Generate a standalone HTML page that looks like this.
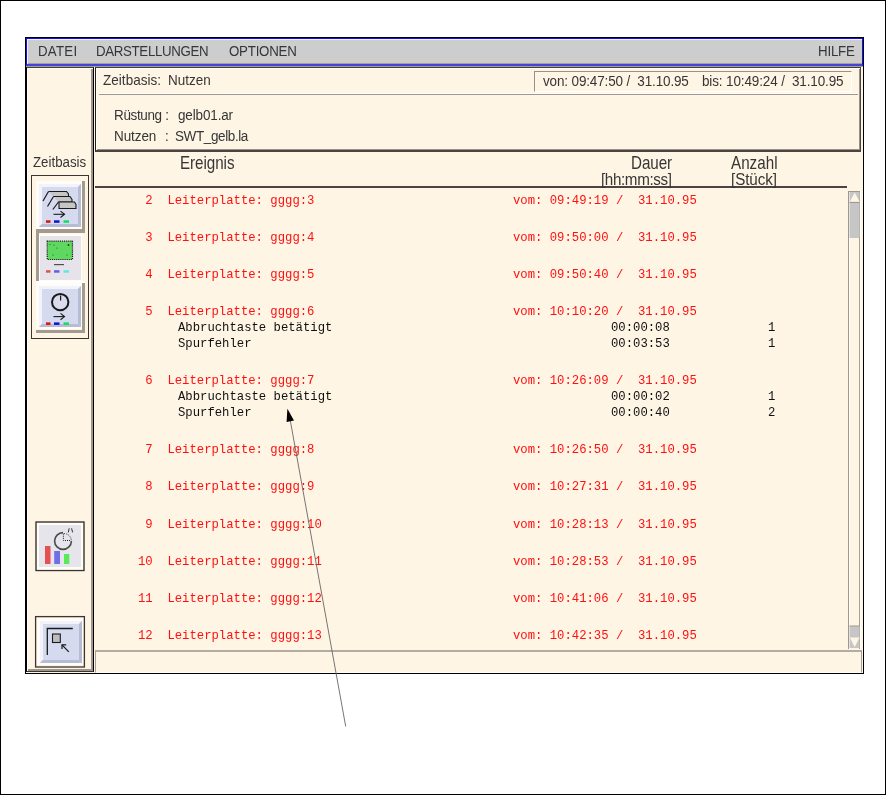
<!DOCTYPE html>
<html><head><meta charset="utf-8">
<style>
*{box-sizing:border-box;margin:0;padding:0}
html,body{width:886px;height:795px;overflow:hidden;background:#fff}
body{position:relative;font-family:"Liberation Sans",sans-serif;color:#363636}
.a{position:absolute;will-change:transform}
.s{font-family:"Liberation Sans",sans-serif;white-space:pre;line-height:1}
.m{font-family:"Liberation Mono",monospace;white-space:pre;line-height:1}
.r{color:#ff1010}
.k{color:#101010}
</style></head><body>
<div class="a" style="left:0;top:0;width:886px;height:795px;border:1px solid #000"></div>
<div class="a" style="left:25px;top:37px;width:839px;height:637px;border:1px solid #000;background:#fff5e5"></div>
<div class="a" style="left:26px;top:38px;width:837px;height:28px;border:1px solid #1010f0;border-bottom:2px solid #4444d8;background:#cdcdcd;box-shadow:inset 1px 1px 0 #f4f4f4, inset 0 -1px 0 #a8a098"></div>
<div class="a" style="left:26px;top:66px;width:837px;height:1px;background:#a8a090"></div>
<div class="a" style="left:26px;top:67px;width:68px;height:605px;border-top:1px solid #404040;border-left:1px solid #000;border-right:1px solid #000;border-bottom:1px solid #3a3632;box-shadow:inset 1px 1px 0 #fff, inset -2px -2px 0 #a0968c"></div>
<div class="a" style="left:95px;top:67px;width:766px;height:85px;border-top:1px solid #404040;border-left:1px solid #202020;border-right:1px solid #4a4540;border-bottom:2px solid #4a4540;box-shadow:inset 1px 1px 0 #fff, inset -1px -1px 0 #9a9088"></div>
<div class="a" style="left:99px;top:93px;width:759px;height:1px;background:#fff"></div>
<div class="a" style="left:99px;top:94px;width:759px;height:1px;background:#a09890"></div>
<div class="a" style="left:534px;top:71px;width:318px;height:21px;border-top:1px solid #9a9088;border-left:1px solid #9a9088;border-bottom:1px solid #fff;border-right:1px solid #fff"></div>
<div class="a" style="left:95px;top:186px;width:752px;height:2px;background:#4a4540"></div>
<div class="a" style="left:848px;top:191px;width:12px;height:458px;background:#fff5e5;border-left:1px solid #a09890;border-top:1px solid #a09890;border-right:1px solid #a89e94;box-shadow:inset 1px 0 0 #fffdf8"></div>
<div class="a" style="left:860px;top:191px;width:1px;height:458px;background:#fffdf8"></div>
<div class="a" style="left:95px;top:650px;width:767px;height:23px;border-top:2px solid #b4aca2;border-left:1px solid #a8a098;border-right:1px solid #a8a098;border-bottom:1px solid #fff"></div>
<div id="t_datei" class="a s" style="left:38.00px;top:45.14px;font-size:13.300px;letter-spacing:0.250px;transform:scaleY(1.1);transform-origin:0 10.86px;">DATEI</div>
<div id="t_dars" class="a s" style="left:96.05px;top:45.14px;font-size:13.300px;letter-spacing:-0.342px;transform:scaleY(1.1);transform-origin:0 10.86px;">DARSTELLUNGEN</div>
<div id="t_opt" class="a s" style="left:228.82px;top:45.14px;font-size:13.300px;letter-spacing:-0.229px;transform:scaleY(1.1);transform-origin:0 10.86px;">OPTIONEN</div>
<div id="t_hilfe" class="a s" style="left:817.50px;top:45.14px;font-size:13.300px;letter-spacing:-0.200px;transform:scaleY(1.1);transform-origin:0 10.86px;">HILFE</div>
<div id="t_zb" class="a s" style="left:33.24px;top:155.84px;font-size:13.300px;letter-spacing:0.000px;transform:scaleY(1.1);transform-origin:0 10.86px;">Zeitbasis</div>
<div id="t_zb2" class="a s" style="left:102.86px;top:74.47px;font-size:13.500px;letter-spacing:0.033px;transform:scaleY(1.06);transform-origin:0 11.03px;">Zeitbasis:</div>
<div id="t_nutzen0" class="a s" style="left:167.66px;top:74.47px;font-size:13.500px;letter-spacing:0.020px;transform:scaleY(1.06);transform-origin:0 11.03px;">Nutzen</div>
<div id="t_von" class="a s" style="left:542.55px;top:74.57px;font-size:13.500px;letter-spacing:-0.146px;transform:scaleY(1.06);transform-origin:0 11.03px;">von: 09:47:50 /  31.10.95</div>
<div id="t_bis" class="a s" style="left:701.50px;top:74.57px;font-size:13.500px;letter-spacing:-0.138px;transform:scaleY(1.06);transform-origin:0 11.03px;">bis: 10:49:24 /  31.10.95</div>
<div id="t_ruest" class="a s" style="left:114.24px;top:109.17px;font-size:13.500px;letter-spacing:-0.363px;transform:scaleY(1.07);transform-origin:0 11.03px;">Rüstung :</div>
<div id="t_gelb" class="a s" style="left:177.82px;top:109.17px;font-size:13.500px;letter-spacing:-0.150px;transform:scaleY(1.07);transform-origin:0 11.03px;">gelb01.ar</div>
<div id="t_nutz" class="a s" style="left:114.24px;top:130.47px;font-size:13.500px;letter-spacing:-0.080px;transform:scaleY(1.07);transform-origin:0 11.03px;">Nutzen</div>
<div id="t_colon2" class="a s" style="left:164.50px;top:130.47px;font-size:13.500px;letter-spacing:0.000px;transform:scaleY(1.07);transform-origin:0 11.03px;">:</div>
<div id="t_swt" class="a s" style="left:175.07px;top:130.47px;font-size:13.500px;letter-spacing:-0.390px;transform:scaleY(1.07);transform-origin:0 11.03px;">SWT_gelb.la</div>
<div id="t_ereig" class="a s" style="left:179.82px;top:156.03px;font-size:15.200px;letter-spacing:-0.057px;transform:scaleY(1.18);transform-origin:0 12.47px;">Ereignis</div>
<div id="t_dauer" class="a s" style="left:630.66px;top:156.33px;font-size:15.200px;letter-spacing:-0.050px;transform:scaleY(1.18);transform-origin:0 12.47px;">Dauer</div>
<div id="t_hh" class="a s" style="left:600.66px;top:172.03px;font-size:15.200px;letter-spacing:-0.367px;transform:scaleY(1.12);transform-origin:0 12.47px;">[hh:mm:ss]</div>
<div id="t_anz" class="a s" style="left:731.24px;top:156.33px;font-size:15.200px;letter-spacing:0.020px;transform:scaleY(1.18);transform-origin:0 12.47px;">Anzahl</div>
<div id="t_stk" class="a s" style="left:730.55px;top:172.03px;font-size:15.200px;letter-spacing:-0.067px;transform:scaleY(1.12);transform-origin:0 12.47px;">[Stück]</div>
<div class="a m r" style="left:138.00px;top:194.82px;font-size:12.25px;letter-spacing:0.0px;"> 2  Leiterplatte: gggg:3</div>
<div class="a m r" style="left:512.50px;top:194.82px;font-size:12.25px;letter-spacing:0.0px;">vom: 09:49:19 /  31.10.95</div>
<div class="a m r" style="left:138.00px;top:231.92px;font-size:12.25px;letter-spacing:0.0px;"> 3  Leiterplatte: gggg:4</div>
<div class="a m r" style="left:512.50px;top:231.92px;font-size:12.25px;letter-spacing:0.0px;">vom: 09:50:00 /  31.10.95</div>
<div class="a m r" style="left:138.00px;top:269.02px;font-size:12.25px;letter-spacing:0.0px;"> 4  Leiterplatte: gggg:5</div>
<div class="a m r" style="left:512.50px;top:269.02px;font-size:12.25px;letter-spacing:0.0px;">vom: 09:50:40 /  31.10.95</div>
<div class="a m r" style="left:138.00px;top:306.02px;font-size:12.25px;letter-spacing:0.0px;"> 5  Leiterplatte: gggg:6</div>
<div class="a m r" style="left:512.50px;top:306.02px;font-size:12.25px;letter-spacing:0.0px;">vom: 10:10:20 /  31.10.95</div>
<div class="a m k" style="left:178.00px;top:322.22px;font-size:12.25px;letter-spacing:0.0px;">Abbruchtaste betätigt</div>
<div class="a m k" style="left:611.00px;top:322.22px;font-size:12.25px;letter-spacing:0.0px;">00:00:08</div>
<div class="a m k" style="left:767.50px;top:322.22px;font-size:12.25px;letter-spacing:0.0px;">1</div>
<div class="a m k" style="left:178.00px;top:338.02px;font-size:12.25px;letter-spacing:0.0px;">Spurfehler</div>
<div class="a m k" style="left:611.00px;top:338.02px;font-size:12.25px;letter-spacing:0.0px;">00:03:53</div>
<div class="a m k" style="left:767.50px;top:338.02px;font-size:12.25px;letter-spacing:0.0px;">1</div>
<div class="a m r" style="left:138.00px;top:374.82px;font-size:12.25px;letter-spacing:0.0px;"> 6  Leiterplatte: gggg:7</div>
<div class="a m r" style="left:512.50px;top:374.82px;font-size:12.25px;letter-spacing:0.0px;">vom: 10:26:09 /  31.10.95</div>
<div class="a m k" style="left:178.00px;top:391.12px;font-size:12.25px;letter-spacing:0.0px;">Abbruchtaste betätigt</div>
<div class="a m k" style="left:611.00px;top:391.12px;font-size:12.25px;letter-spacing:0.0px;">00:00:02</div>
<div class="a m k" style="left:767.50px;top:391.12px;font-size:12.25px;letter-spacing:0.0px;">1</div>
<div class="a m k" style="left:178.00px;top:406.62px;font-size:12.25px;letter-spacing:0.0px;">Spurfehler</div>
<div class="a m k" style="left:611.00px;top:406.62px;font-size:12.25px;letter-spacing:0.0px;">00:00:40</div>
<div class="a m k" style="left:767.50px;top:406.62px;font-size:12.25px;letter-spacing:0.0px;">2</div>
<div class="a m r" style="left:138.00px;top:443.72px;font-size:12.25px;letter-spacing:0.0px;"> 7  Leiterplatte: gggg:8</div>
<div class="a m r" style="left:512.50px;top:443.72px;font-size:12.25px;letter-spacing:0.0px;">vom: 10:26:50 /  31.10.95</div>
<div class="a m r" style="left:138.00px;top:481.12px;font-size:12.25px;letter-spacing:0.0px;"> 8  Leiterplatte: gggg:9</div>
<div class="a m r" style="left:512.50px;top:481.12px;font-size:12.25px;letter-spacing:0.0px;">vom: 10:27:31 /  31.10.95</div>
<div class="a m r" style="left:138.00px;top:518.62px;font-size:12.25px;letter-spacing:0.0px;"> 9  Leiterplatte: gggg:10</div>
<div class="a m r" style="left:512.50px;top:518.62px;font-size:12.25px;letter-spacing:0.0px;">vom: 10:28:13 /  31.10.95</div>
<div class="a m r" style="left:138.00px;top:555.92px;font-size:12.25px;letter-spacing:0.0px;">10  Leiterplatte: gggg:11</div>
<div class="a m r" style="left:512.50px;top:555.92px;font-size:12.25px;letter-spacing:0.0px;">vom: 10:28:53 /  31.10.95</div>
<div class="a m r" style="left:138.00px;top:593.12px;font-size:12.25px;letter-spacing:0.0px;">11  Leiterplatte: gggg:12</div>
<div class="a m r" style="left:512.50px;top:593.12px;font-size:12.25px;letter-spacing:0.0px;">vom: 10:41:06 /  31.10.95</div>
<div class="a m r" style="left:138.00px;top:630.22px;font-size:12.25px;letter-spacing:0.0px;">12  Leiterplatte: gggg:13</div>
<div class="a m r" style="left:512.50px;top:630.22px;font-size:12.25px;letter-spacing:0.0px;">vom: 10:42:35 /  31.10.95</div>
<svg class="a" style="left:0;top:0" width="886" height="795" viewBox="0 0 886 795"><rect x="31.5" y="175.5" width="57" height="163" fill="none" stroke="#3a3632" stroke-width="1"/><rect x="36" y="181" width="46" height="48" fill="#fffdf6"/><rect x="39" y="184" width="42" height="43" fill="#d6daef"/><polygon points="39,184 81,184 78,187 42,187" fill="#f2f3fb"/><polygon points="39,184 42,187 42,224 39,227" fill="#f2f3fb"/><polygon points="39,227 42,224 78,224 81,227" fill="#b6bcd6"/><polygon points="81,184 81,227 78,224 78,187" fill="#b6bcd6"/><rect x="36" y="229" width="49" height="4" fill="#a39a90"/><rect x="82" y="181" width="3" height="52" fill="#a39a90"/><rect x="36" y="233" width="3" height="49" fill="#a39a90"/><rect x="39" y="234" width="43" height="47" fill="#fffdf6"/><rect x="40" y="236" width="41" height="44" fill="#e6e4ea"/><rect x="36" y="281" width="49" height="2" fill="#ffffff"/><rect x="36" y="283" width="46" height="46" fill="#fffdf6"/><rect x="39" y="286" width="42" height="41" fill="#d6daef"/><polygon points="39,286 81,286 78,289 42,289" fill="#f2f3fb"/><polygon points="39,286 42,289 42,324 39,327" fill="#f2f3fb"/><polygon points="39,327 42,324 78,324 81,327" fill="#b6bcd6"/><polygon points="81,286 81,327 78,324 78,289" fill="#b6bcd6"/><rect x="36" y="330" width="49" height="3" fill="#a39a90"/><rect x="82" y="283" width="3" height="50" fill="#a39a90"/><g fill="#c6c6c6" stroke="#1a1a1a" stroke-width="1.1"><path d="M48.5,191.5 H66.5 L68.5,194 V196.5 H53.5"/><path d="M53.5,196.5 H70 L72,199.5 V202 H58.5"/><path d="M58.5,202 H74.5 L76,204.5 V208.5 H59 V202"/></g><g stroke="#1a1a1a" stroke-width="1.2" fill="none"><path d="M48.5,191.5 L43,201"/><path d="M53.5,196.5 L47.5,206.5"/><path d="M58.5,202 L52.8,209.5"/></g><g stroke="#1a1a1a" stroke-width="1.1" fill="none"><path d="M53.5,214.3 H64.5"/><path d="M60.5,211.10000000000002 L64.5,214.3 L60.5,217.5"/></g><rect x="46" y="220.3" width="4.5" height="2.5" fill="#e01010"/><rect x="54" y="220.3" width="5.5" height="2.5" fill="#1010d0"/><rect x="63.5" y="220.3" width="5.5" height="2.5" fill="#10e060"/><rect x="47.2" y="241.2" width="25.3" height="18.3" fill="#5ed85e" stroke="#202020" stroke-width="1.2" stroke-dasharray="1.2,0.9"/><g fill="#303030"><circle cx="68.5" cy="245" r="0.9"/><circle cx="50" cy="244.5" r="0.5"/><circle cx="54" cy="245" r="0.5"/><circle cx="57" cy="248" r="0.5"/><circle cx="53" cy="255" r="0.5"/><circle cx="67" cy="255" r="0.5"/></g><rect x="54" y="264" width="10" height="1.2" fill="#505050"/><rect x="46" y="270.2" width="4.5" height="2.5" fill="#e05050"/><rect x="54" y="270.2" width="5.5" height="2.5" fill="#6060e0"/><rect x="63.5" y="270.2" width="5.5" height="2.5" fill="#60e8e8"/><circle cx="60.2" cy="302.1" r="8.2" fill="#dadcee" stroke="#1a1a1a" stroke-width="2"/><path d="M60.6,295.5 V300.5" stroke="#1a1a1a" stroke-width="1.2"/><g stroke="#1a1a1a" stroke-width="1.1" fill="none"><path d="M53.5,316.6 H64.5"/><path d="M60.5,313.40000000000003 L64.5,316.6 L60.5,319.8"/></g><rect x="46" y="322.4" width="4.5" height="2.5" fill="#e01010"/><rect x="54" y="322.4" width="5.5" height="2.5" fill="#1010d0"/><rect x="63.5" y="322.4" width="5.5" height="2.5" fill="#10e060"/><rect x="36" y="522" width="48" height="48.5" fill="none" stroke="#3a3632" stroke-width="1.4"/><rect x="37" y="523" width="46" height="46.5" fill="#fffdf6"/><rect x="39" y="525" width="42" height="42" fill="#e7e5ec"/><path d="M63,532.6 A8.4,8.4 0 1,0 71.4,541" fill="#e6e4ee" stroke="#4a4a4a" stroke-width="1.6"/><path d="M63.4,533.6 V540.5 H71.3" fill="none" stroke="#1a1a1a" stroke-width="1" stroke-dasharray="1,1.1"/><path d="M64,533.6 A7,7 0 0,1 71.3,540.5" fill="none" stroke="#1a1a1a" stroke-width="1" stroke-dasharray="1,1.3"/><path d="M68.3,532.4 L69.2,528.3 M71.6,528.3 L72.6,532.4" stroke="#333" stroke-width="1"/><rect x="45" y="546" width="5.5" height="18" fill="#e65050"/><rect x="54.2" y="551" width="5.8" height="13" fill="#7070e4"/><rect x="64" y="554" width="5.3" height="10" fill="#58ea58"/><rect x="35.6" y="616.6" width="48.8" height="50.4" fill="none" stroke="#3a3632" stroke-width="1.3"/><rect x="37" y="618" width="46" height="47" fill="#fffdf6"/><rect x="40" y="621" width="42" height="42" fill="#d6daef"/><polygon points="40,621 82,621 79,624 43,624" fill="#f2f3fb"/><polygon points="40,621 43,624 43,660 40,663" fill="#f2f3fb"/><polygon points="40,663 43,660 79,660 82,663" fill="#b6bcd6"/><polygon points="82,621 82,663 79,660 79,624" fill="#b6bcd6"/><g stroke="#1a1a1a" stroke-width="1.3" fill="none"><path d="M47.3,655 V628.5 H72.8"/></g><rect x="52.5" y="634" width="7.8" height="8.5" fill="#bdbdbd" stroke="#1a1a1a" stroke-width="1.1"/><g stroke="#1a1a1a" stroke-width="1.2" fill="none"><path d="M68.8,651.8 L62,644.8"/><path d="M62,649 V644.8 H66.2"/></g><rect x="849.5" y="192" width="10" height="46" fill="#c6c6c6"/><polygon points="854.7,192.5 849.8,201.8 859.6,201.8" fill="#fff5e5"/><rect x="849.5" y="202" width="10" height="1" fill="#a09890"/><rect x="849.5" y="626" width="10" height="22" fill="#c6c6c6"/><rect x="849.5" y="625.5" width="10" height="1" fill="#a09890"/><polygon points="849.8,637.5 859.6,637.5 854.7,647" fill="#fff5e5"/><line x1="290.2" y1="420" x2="345.7" y2="726.4" stroke="#666" stroke-width="0.9"/><polygon points="287.4,408.7 286.6,421.9 294,420.4" fill="#000"/></svg>
</body></html>
